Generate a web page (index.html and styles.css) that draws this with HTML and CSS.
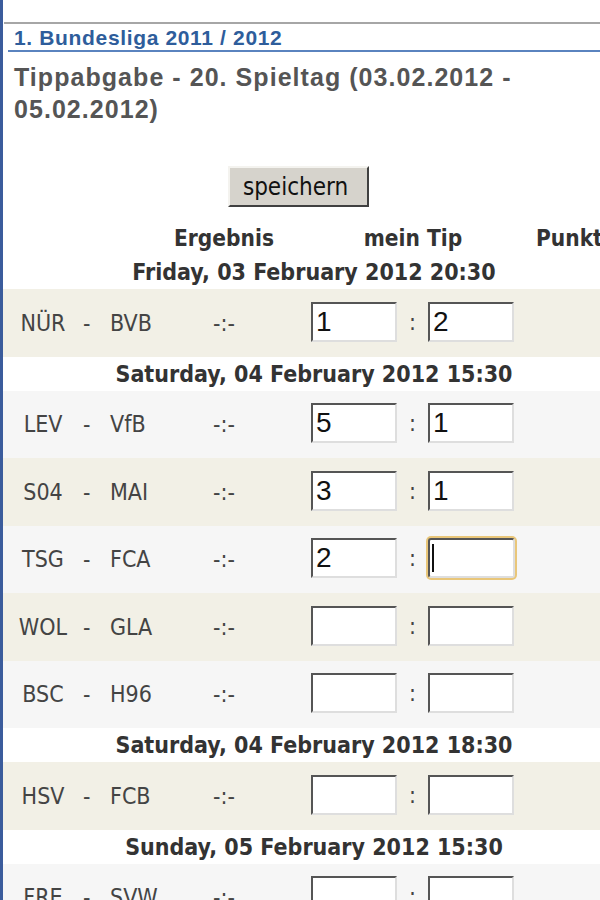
FILE: index.html
```html
<!DOCTYPE html>
<html lang="de">
<head>
<meta charset="utf-8">
<title>Tippabgabe</title>
<link rel="stylesheet" href="styles.css">
</head>
<body>
<div class="page">
  <div class="rule"></div>
  <h2 class="league">1. Bundesliga 2011 / 2012</h2>
  <h1 class="title">Tippabgabe - 20. Spieltag (03.02.2012 - 05.02.2012)</h1>
  <form class="tipform">
    <div class="actions"><button type="button" class="save">speichern</button></div>
    <table class="matches">
      <colgroup>
        <col class="c-home"><col class="c-sep"><col class="c-away"><col class="c-res"><col class="c-gap"><col class="c-tip"><col class="c-pts">
      </colgroup>
      <thead>
        <tr><th colspan="3"></th><th><span class="hl">Ergebnis</span></th><th></th><th>mein Tip</th><th class="pts-h">Punkte</th></tr>
      </thead>
      <tbody>
        <tr class="date"><td colspan="7">Friday, 03 February 2012 20:30</td></tr>
        <tr class="match odd"><td class="home">NÜR</td><td class="sep">-</td><td class="away">BVB</td><td class="res">-:-</td><td></td><td class="tip"><div class="tipbox"><input class="goal" value="1"><span class="colon">:</span><input class="goal" value="2"></div></td><td></td></tr>
        <tr class="date"><td colspan="7">Saturday, 04 February 2012 15:30</td></tr>
        <tr class="match even"><td class="home">LEV</td><td class="sep">-</td><td class="away">VfB</td><td class="res">-:-</td><td></td><td class="tip"><div class="tipbox"><input class="goal" value="5"><span class="colon">:</span><input class="goal" value="1"></div></td><td></td></tr>
        <tr class="match odd"><td class="home">S04</td><td class="sep">-</td><td class="away">MAI</td><td class="res">-:-</td><td></td><td class="tip"><div class="tipbox"><input class="goal" value="3"><span class="colon">:</span><input class="goal" value="1"></div></td><td></td></tr>
        <tr class="match even"><td class="home">TSG</td><td class="sep">-</td><td class="away">FCA</td><td class="res">-:-</td><td></td><td class="tip"><div class="tipbox"><input class="goal" value="2"><span class="colon">:</span><span class="focus-wrap"><input class="goal focused" value=""></span></div></td><td></td></tr>
        <tr class="match odd"><td class="home">WOL</td><td class="sep">-</td><td class="away">GLA</td><td class="res">-:-</td><td></td><td class="tip"><div class="tipbox"><input class="goal" value=""><span class="colon">:</span><input class="goal" value=""></div></td><td></td></tr>
        <tr class="match even"><td class="home">BSC</td><td class="sep">-</td><td class="away">H96</td><td class="res">-:-</td><td></td><td class="tip"><div class="tipbox"><input class="goal" value=""><span class="colon">:</span><input class="goal" value=""></div></td><td></td></tr>
        <tr class="date"><td colspan="7">Saturday, 04 February 2012 18:30</td></tr>
        <tr class="match odd"><td class="home">HSV</td><td class="sep">-</td><td class="away">FCB</td><td class="res">-:-</td><td></td><td class="tip"><div class="tipbox"><input class="goal" value=""><span class="colon">:</span><input class="goal" value=""></div></td><td></td></tr>
        <tr class="date"><td colspan="7">Sunday, 05 February 2012 15:30</td></tr>
        <tr class="match even"><td class="home">FRE</td><td class="sep">-</td><td class="away">SVW</td><td class="res">-:-</td><td></td><td class="tip"><div class="tipbox"><input class="goal" value=""><span class="colon">:</span><input class="goal" value=""></div></td><td></td></tr>
      </tbody>
    </table>
  </form>
</div>
</body>
</html>
```
FILE: styles.css
```css
html, body {
  margin: 0;
  padding: 0;
  background: #fff;
}
.page {
  border-left: 3px solid #3b5c9c;
  height: 900px;
  overflow: hidden;
  font-family: "DejaVu Sans Condensed", "DejaVu Sans", sans-serif;
}
.rule {
  margin: 22px 0 0 1px;
  border-top: 2px solid #a6a6a6;
}
.league {
  margin: 0 0 0 5px;
  padding: 2px 0 0 6px;
  line-height: 24px;
  font-family: "Liberation Sans", Arial, sans-serif;
  font-size: 21px;
  letter-spacing: 0.65px;
  font-weight: bold;
  color: #2e5d9b;
  border-bottom: 2px solid #5a83bf;
}
.title {
  margin: 9px 0 0 0;
  padding-left: 11px;
  font-family: "Liberation Sans", Arial, sans-serif;
  font-size: 25px;
  letter-spacing: 1.05px;
  line-height: 32px;
  font-weight: bold;
  color: #555;
}
.tipform {
  margin: 0;
}
.actions {
  padding-left: 225px;
  margin-top: 41px;
}
.save {
  width: 141px;
  height: 41px;
  margin: 0;
  padding: 0 6px 0 0;
  background: #d6d3cc;
  border-top: 2px solid #f4f3ef;
  border-left: 2px solid #f4f3ef;
  border-right: 2px solid #404040;
  border-bottom: 2px solid #404040;
  font-family: "DejaVu Sans Condensed", "DejaVu Sans", sans-serif;
  font-size: 24px;
  color: #111;
}
.matches {
  margin-top: 13px;
  width: 622px;
  table-layout: fixed;
  border-collapse: collapse;
  color: #333;
}
.c-home { width: 80px; }
.c-sep { width: 6px; }
.c-away { width: 91px; }
.c-res { width: 88px; }
.c-gap { width: 22px; }
.c-tip { width: 246px; }
.c-pts { width: 89px; }
.matches th {
  height: 35px;
  padding: 0;
  font-size: 22.5px;
  font-weight: bold;
  color: #333;
  text-align: center;
  white-space: nowrap;
}
.hl {
  display: inline-block;
  margin: 0 -20px;
}
.matches th.pts-h {
  text-align: left;
}
.matches td {
  padding: 0;
  white-space: nowrap;
}
.date td {
  height: 34px;
  text-align: center;
  font-size: 23px;
  font-weight: bold;
  color: #333;
  background: #fff;
}
.match td {
  height: 67.5px;
  font-size: 23px;
  color: #444;
}
.match.odd td { background: #f2f0e6; }
.match.even td { background: #f6f6f6; }
.match .home { text-align: center; }
.match .sep { text-align: center; }
.match .away { padding-left: 21px; }
.match .res { text-align: center; }
.match .tip {
  padding-left: 21px;
}
.tipbox {
  display: flex;
  align-items: center;
  height: 40px;
  margin-bottom: 2px;
}
.goal {
  box-sizing: border-box;
  width: 86px;
  height: 40px;
  margin: 0;
  padding: 0 3px;
  background: #fff;
  border-top: 2px solid #555;
  border-left: 2px solid #555;
  border-right: 2px solid #dedede;
  border-bottom: 2px solid #dedede;
  font-family: "Liberation Sans", Arial, sans-serif;
  font-size: 28px;
  color: #111;
  outline: none;
}
.colon {
  width: 31px;
  text-align: center;
  font-size: 23px;
  color: #444;
}
.focus-wrap {
  position: relative;
  display: block;
  height: 40px;
}
.goal.focused {
  width: 87px;
  border-radius: 3px;
  box-shadow: 0 0 0 2px #e9c679;
}
.focus-wrap::after {
  content: "";
  position: absolute;
  left: 4px;
  top: 6px;
  width: 2px;
  height: 28px;
  background: #111;
}
```
